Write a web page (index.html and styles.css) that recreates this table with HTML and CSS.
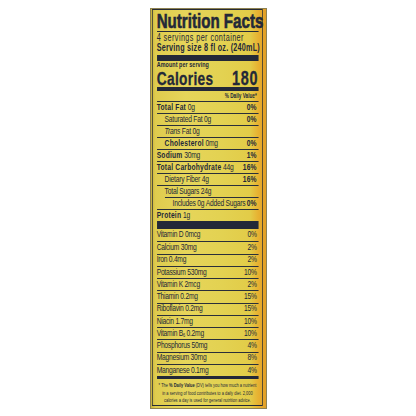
FILE: index.html
```html
<!DOCTYPE html>
<html>
<head>
<meta charset="utf-8">
<link rel="stylesheet" href="styles.css">
</head>
<body>
<div class="bag">
  <div class="label">
    <div class="title">Nutrition Facts</div>
    <div class="servings">4 servings per container</div>
    <div class="size">Serving size 8 fl oz. (240mL)</div>
    <div class="bar bar-thick"></div>
    <div class="amount">Amount per serving</div>
    <div class="calories"><span>Calories</span><span class="cal-num">180</span></div>
    <div class="bar bar-med"></div>
    <div class="dv">% Daily Value*</div>
    <div class="row"><span><b>Total Fat</b> 0g</span><b>0%</b></div>
    <div class="row ind1"><span>Saturated Fat 0g</span><b>0%</b></div>
    <div class="row ind1"><span><i>Trans</i> Fat 0g</span></div>
    <div class="row ind1"><span><b>Cholesterol</b> 0mg</span><b>0%</b></div>
    <div class="row"><span><b>Sodium</b> 30mg</span><b>1%</b></div>
    <div class="row"><span><b>Total Carbohydrate</b> 44g</span><b>16%</b></div>
    <div class="row ind1"><span>Dietary Fiber 4g</span><b>16%</b></div>
    <div class="row ind1"><span>Total Sugars 24g</span></div>
    <div class="row ind2"><span>Includes 0g Added Sugars</span><b>0%</b></div>
    <div class="row"><span><b>Protein</b> 1g</span></div>
    <div class="bar bar-protein"></div>
    <div class="row vrow"><span>Vitamin D 0mcg</span><span>0%</span></div>
    <div class="row vrow"><span>Calcium 30mg</span><span>2%</span></div>
    <div class="row vrow"><span>Iron 0.4mg</span><span>2%</span></div>
    <div class="row vrow"><span>Potassium 530mg</span><span>10%</span></div>
    <div class="row vrow"><span>Vitamin K 2mcg</span><span>2%</span></div>
    <div class="row vrow"><span>Thiamin 0.2mg</span><span>15%</span></div>
    <div class="row vrow"><span>Riboflavin 0.2mg</span><span>15%</span></div>
    <div class="row vrow"><span>Niacin 1.7mg</span><span>10%</span></div>
    <div class="row vrow"><span>Vitamin B<sub>6</sub> 0.2mg</span><span>10%</span></div>
    <div class="row vrow"><span>Phosphorus 50mg</span><span>4%</span></div>
    <div class="row vrow"><span>Magnesium 30mg</span><span>8%</span></div>
    <div class="row vrow"><span>Manganese 0.1mg</span><span>4%</span></div>
    <div class="bar bar-end"></div>
    <div class="foot">* The <b>% Daily Value</b> (DV) tells you how much a nutrient<br>in a serving of food contributes to a daily diet. 2,000<br>calories a day is used for general nutrition advice.</div>
  </div>
</div>
</body>
</html>
```
FILE: styles.css
```css
html, body {
  margin: 0;
  padding: 0;
  background: #ffffff;
}
.bag {
  width: 117px;
  height: 401px;
  margin: 8px 0 0 150px;
  box-sizing: border-box;
  border: 1px solid #8d8152;
  padding-left: 1px;
  background: linear-gradient(90deg, #c8b23c 0, #dfcc4e 4%, #e6d55a 30%, #e3d252 60%, #e2cc48 86%, #e7b232 93%, #e29e26 100%);
  overflow: hidden;
}
.label {
  width: 154px;
  box-sizing: border-box;
  border-left: 1.4px solid #252a36;
  border-right: 1.4px solid #252a36;
  border-top: 1px solid #252a36;
  border-bottom: 1px solid #252a36;
  padding: 0 5.5px;
  transform: scaleX(0.72);
  transform-origin: 0 0;
  color: #232838;
  font-family: "Liberation Sans", Arial, sans-serif;
}
.title {
  height: 21px;
  line-height: 21px;
  font-size: 21px;
  font-weight: 900;
  white-space: nowrap;
  -webkit-text-stroke: 0.6px #232838;
  border-bottom: 1px solid #252a36;
}
.servings {
  height: 10px;
  line-height: 10px;
  font-size: 10px;
  letter-spacing: 0.6px;
  white-space: nowrap;
  padding-top: 1px;
  box-sizing: border-box;
}
.size {
  height: 12px;
  line-height: 12px;
  font-size: 10px;
  font-weight: bold;
  letter-spacing: 0.35px;
  white-space: nowrap;
}
.bar {
  background: #232838;
}
.bar-thick {
  height: 6px;
  margin-top: 1px;
}
.amount {
  height: 8px;
  line-height: 8px;
  font-size: 7.5px;
  font-weight: bold;
  letter-spacing: 0.1px;
  white-space: nowrap;
}
.calories {
  height: 18px;
  display: flex;
  justify-content: space-between;
  align-items: center;
  font-size: 19px;
  font-weight: bold;
  letter-spacing: 0.5px;
  line-height: 1;
  -webkit-text-stroke: 0.3px #232838;
}
.cal-num {
  font-size: 20px;
  letter-spacing: 1px;
}
.bar-med {
  height: 4px;
}
.dv {
  height: 10px;
  line-height: 10px;
  font-size: 6.5px;
  font-weight: bold;
  text-align: right;
  padding-right: 2px;
}
.row {
  height: 12px;
  box-sizing: border-box;
  border-top: 1px solid #2a2f3a;
  display: flex;
  justify-content: space-between;
  align-items: center;
  font-size: 9.3px;
  line-height: 1;
  letter-spacing: -0.3px;
  white-space: nowrap;
  padding-right: 2px;
}
.row b {
  letter-spacing: 0.3px;
}
.ind1 {
  padding-left: 11px;
}
.ind2 {
  margin-left: 11px;
  padding-left: 11px;
}
.bar-protein {
  height: 8px;
}
.vrow {
  height: 12.25px;
  letter-spacing: -0.35px;
}
.bar + .row {
  border-top: 0;
}
.row sub {
  font-size: 5.5px;
  vertical-align: -1px;
  line-height: 0;
}
.bar-end {
  height: 3px;
}
.foot {
  height: 26px;
  box-sizing: border-box;
  padding-top: 3px;
  font-size: 5.5px;
  line-height: 7.5px;
  text-align: center;
  white-space: nowrap;
}
```
